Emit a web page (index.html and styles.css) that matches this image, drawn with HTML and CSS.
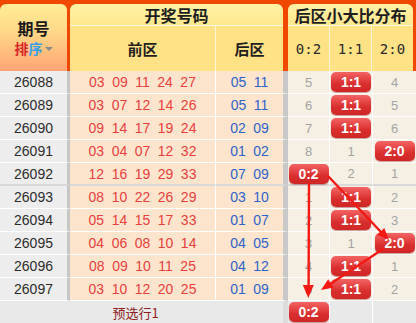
FILE: index.html
```html
<!DOCTYPE html>
<html lang="zh">
<head>
<meta charset="utf-8">
<title>后区小大比分布</title>
<link rel="stylesheet" href="styles.css">
</head>
<body>
<div class="board">
  <div class="head">
    <div class="h-period">
      <div class="h-qh">期号</div>
      <div class="h-sort"><span class="s-red">排</span><span class="s-blue">序</span><span class="s-tri"></span></div>
    </div>
    <div class="h-draw">
      <div class="h-title">开奖号码</div>
      <div class="h-sub"><div class="h-front">前区</div><div class="h-back">后区</div></div>
    </div>
    <div class="h-dist">
      <div class="h-title">后区小大比分布</div>
      <div class="h-sub3"><div>0:2</div><div>1:1</div><div>2:0</div></div>
    </div>
  </div>

  <div class="rows">
    <div class="row"><div class="c-period">26088</div><div class="c-front"><span>03</span><span>09</span><span>11</span><span>24</span><span>27</span></div><div class="c-back"><span>05</span><span>11</span></div><div class="c-d">5</div><div class="c-d"><span class="badge">1:1</span></div><div class="c-d">4</div></div>
    <div class="row"><div class="c-period">26089</div><div class="c-front"><span>03</span><span>07</span><span>12</span><span>14</span><span>26</span></div><div class="c-back"><span>05</span><span>11</span></div><div class="c-d">6</div><div class="c-d"><span class="badge">1:1</span></div><div class="c-d">5</div></div>
    <div class="row"><div class="c-period">26090</div><div class="c-front"><span>09</span><span>14</span><span>17</span><span>19</span><span>24</span></div><div class="c-back"><span>02</span><span>09</span></div><div class="c-d">7</div><div class="c-d"><span class="badge">1:1</span></div><div class="c-d">6</div></div>
    <div class="row"><div class="c-period">26091</div><div class="c-front"><span>03</span><span>04</span><span>07</span><span>12</span><span>32</span></div><div class="c-back"><span>01</span><span>02</span></div><div class="c-d">8</div><div class="c-d">1</div><div class="c-d"><span class="badge">2:0</span></div></div>
    <div class="row row-sep"><div class="c-period">26092</div><div class="c-front"><span>12</span><span>16</span><span>19</span><span>29</span><span>33</span></div><div class="c-back"><span>07</span><span>09</span></div><div class="c-d"><span class="badge">0:2</span></div><div class="c-d">2</div><div class="c-d">1</div></div>
    <div class="row"><div class="c-period">26093</div><div class="c-front"><span>08</span><span>10</span><span>22</span><span>26</span><span>29</span></div><div class="c-back"><span>03</span><span>10</span></div><div class="c-d">1</div><div class="c-d"><span class="badge">1:1</span></div><div class="c-d">2</div></div>
    <div class="row"><div class="c-period">26094</div><div class="c-front"><span>05</span><span>14</span><span>15</span><span>17</span><span>33</span></div><div class="c-back"><span>01</span><span>07</span></div><div class="c-d">2</div><div class="c-d"><span class="badge">1:1</span></div><div class="c-d">3</div></div>
    <div class="row"><div class="c-period">26095</div><div class="c-front"><span>04</span><span>06</span><span>08</span><span>10</span><span>14</span></div><div class="c-back"><span>04</span><span>05</span></div><div class="c-d">3</div><div class="c-d">1</div><div class="c-d"><span class="badge">2:0</span></div></div>
    <div class="row"><div class="c-period">26096</div><div class="c-front"><span>08</span><span>09</span><span>10</span><span>11</span><span>25</span></div><div class="c-back"><span>04</span><span>12</span></div><div class="c-d">4</div><div class="c-d"><span class="badge">1:1</span></div><div class="c-d">1</div></div>
    <div class="row"><div class="c-period">26097</div><div class="c-front"><span>03</span><span>10</span><span>12</span><span>20</span><span>25</span></div><div class="c-back"><span>01</span><span>09</span></div><div class="c-d">5</div><div class="c-d"><span class="badge">1:1</span></div><div class="c-d">2</div></div>
  </div>

  <div class="foot">
    <div class="f-label">预选行1</div>
    <div class="f-d"><span class="badge">0:2</span></div>
    <div class="f-d"></div>
    <div class="f-d"></div>
  </div>

  <svg class="arrows" width="416" height="323" viewBox="0 0 416 323">
    <g stroke="#f41a14" stroke-width="2.4" stroke-linecap="round" fill="none">
      <line x1="309" y1="184" x2="308.6" y2="287"/>
      <line x1="328" y1="176" x2="381" y2="232"/>
      <line x1="383" y1="249" x2="331" y2="283.5"/>
    </g>
    <g fill="#f41a14">
      <polygon points="308.3,298 302.8,285 313.8,285"/>
      <polygon points="389,240 377.1,234.8 384.3,227.9"/>
      <polygon points="321,290 328.2,279.2 333.8,287.6"/>
    </g>
  </svg>
</div>
</body>
</html>
```

FILE: styles.css
```css
* { box-sizing: border-box; }
html, body { margin: 0; padding: 0; background: #ffffff; }
body {
  font-family: "Liberation Sans", Arial, "Noto Sans CJK SC", sans-serif;
  width: 416px;
  height: 323px;
  overflow: hidden;
}
.board { position: relative; width: 416px; height: 323px; }

/* header */
.head {
  display: flex;
  height: 71px;
  background: #f04800;
  padding: 4px 3px 0 0;
}
.h-period {
  width: 67px;
  margin-right: 3px;
  border-radius: 6px 6px 0 0;
  background: linear-gradient(#ffed96 0%, #ffd587 45%, #ffa474 100%);
  display: flex;
  flex-direction: column;
  align-items: center;
  justify-content: center;
  gap: 4px;
  padding-top: 2px;
  font-weight: bold;
  font-family: "Liberation Sans", "Noto Sans CJK SC", sans-serif;
}
.h-qh { font-size: 16px; line-height: 17px; color: #1a1a1a; }
.h-sort { font-size: 14px; line-height: 15px; display: flex; align-items: center; }
.s-red { color: #d8262a; }
.s-blue { color: #35a0ea; }
.s-tri {
  width: 0; height: 0;
  margin-left: 2px;
  border-left: 4px solid transparent;
  border-right: 4px solid transparent;
  border-top: 4px solid #8a8a8a;
}
.h-draw {
  width: 213px;
  margin-right: 5px;
  display: flex;
  flex-direction: column;
  border-radius: 6px 6px 0 0;
  overflow: hidden;
}
.h-dist {
  width: 125px;
  display: flex;
  flex-direction: column;
  border-radius: 6px 6px 0 0;
  overflow: hidden;
}
.h-title {
  height: 22px;
  background: linear-gradient(#fff3a6, #ffe78f);
  border-bottom: 1px solid #fff7dc;
  display: flex;
  align-items: center;
  justify-content: center;
  font-family: "Noto Sans CJK SC", "Liberation Sans", sans-serif;
  font-weight: bold;
  font-size: 16px;
  color: #1e1e1e;
  padding-top: 1px;
}
.h-sub, .h-sub3 {
  flex: 1;
  display: flex;
  background: #ffe186;
}
.h-sub > div {
  display: flex;
  align-items: center;
  justify-content: center;
  font-family: "Noto Sans CJK SC", "Liberation Sans", sans-serif;
  font-weight: bold;
  font-size: 15px;
  color: #1e1e1e;
}
.h-front { width: 146px; border-right: 1px solid #fff6da; }
.h-back { flex: 1; }
.h-sub3 > div {
  flex: 1;
  display: flex;
  align-items: center;
  justify-content: center;
  font-family: "DejaVu Sans Mono", "Liberation Mono", monospace;
  font-size: 14px;
  color: #2a2a2a;
  border-right: 1px solid #fff6da;
}
.h-sub3 > div:last-child { border-right: none; }

/* rows */
.row {
  display: grid;
  grid-template-columns: 70px 146px 72px 42px 43px 43px;
  height: 23px;
}
.row > div {
  border-bottom: 1px solid #ffffff;
  display: flex;
  align-items: center;
  justify-content: center;
}
.row-sep > div { border-bottom: 2px solid #d9d9d9; }
.c-period {
  background: #ededed;
  border-right: 3px solid #c6c6c6;
  font-size: 14px;
  color: #2c2c2c;
}
.c-front, .c-back {
  background: #fde5cd;
  gap: 7.5px;
  font-size: 14px;
}
.c-front { color: #e8413d; border-right: 1px solid #ffffff; }
.c-back { color: #2f62c8; border-right: 5px solid #c8c8c8; }
.c-d {
  background: #f6f0e4;
  border-right: 1px solid #ffffff;
  font-size: 13px;
  color: #a3a3a3;
}
.c-d:last-child { border-right: none; }

.badge {
  display: flex;
  align-items: center;
  justify-content: center;
  width: 40px;
  height: 20px;
  border-radius: 5px;
  background: linear-gradient(#f46464, #d92e2e 60%, #cf2626);
  color: #ffffff;
  font-size: 14px;
  font-weight: bold;
  box-shadow: 0 1px 1px rgba(120, 0, 0, 0.35);
}

/* footer */
.foot {
  display: grid;
  grid-template-columns: 288px 42px 43px 43px;
  height: 22px;
}
.foot > div {
  background: #e9e9e9;
  display: flex;
  align-items: center;
  justify-content: center;
}
.f-label {
  border-right: 5px solid #dcdcdc;
  padding-right: 12px;
  font-family: "Noto Sans CJK SC", "Liberation Sans", sans-serif;
  font-size: 13px;
  color: #8e1d1d;
}
.f-d { border-right: 1px solid #ffffff; }
.f-d:last-child { border-right: none; }

.arrows {
  position: absolute;
  left: 0;
  top: 0;
  pointer-events: none;
}
```
